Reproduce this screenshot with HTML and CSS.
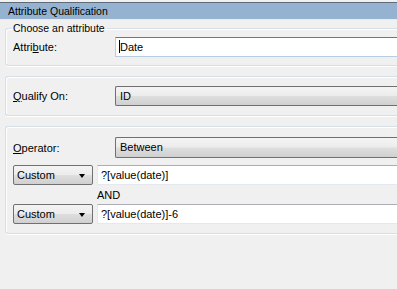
FILE: index.html
```html
<!DOCTYPE html>
<html lang="en">
<head>
  <meta charset="UTF-8">
  <title>Attribute Qualification</title>
  <link rel="stylesheet" href="styles.css">
</head>
<body>
  <div class="titlebar">Attribute Qualification</div>

  <fieldset class="group group-attr">
    <legend>Choose an attribute</legend>
    <div class="row">
      <label class="field-label">Attri<u>b</u>ute:</label>
      <div class="textbox focused"><span class="caret"></span>Date</div>
    </div>
  </fieldset>

  <fieldset class="group group-qualify">
    <div class="row">
      <label class="field-label"><u>Q</u>ualify On:</label>
      <div class="combo">ID</div>
    </div>
  </fieldset>

  <fieldset class="group group-operator">
    <div class="row row-tall">
      <label class="field-label"><u>O</u>perator:</label>
      <div class="combo">Between</div>
    </div>
    <div class="row row-value">
      <div class="dropdown">Custom<span class="arrow"></span></div>
      <div class="textbox">?[value(date)]</div>
    </div>
    <div class="and-label">AND</div>
    <div class="row">
      <div class="dropdown">Custom<span class="arrow"></span></div>
      <div class="textbox">?[value(date)]-6</div>
    </div>
  </fieldset>
</body>
</html>
```

FILE: styles.css
```css
html, body {
  overflow: hidden;
}
body {
  margin: 0;
  width: 397px;
  height: 289px;
  background: #f0f0f0;
  font-family: "Liberation Sans", Arial, sans-serif;
  font-size: 11px;
  color: #000;
}
.titlebar {
  margin-top: 2px;
  height: 16px;
  line-height: 16px;
  padding-left: 8px;
  font-size: 10.5px;
  background: #95b3d0;
  border-top: 1px solid #5f6b78;
  border-bottom: 1px solid #e6ecf2;
}
.group {
  margin: 0 0 0 5px;
  padding: 0 0 9px 7px;
  border: 1px solid #d5dfe5;
  border-right: none;
  border-radius: 3px 0 0 3px;
  box-shadow: inset 1px 1px 0 #fff, 0 1px 0 #fff;
  min-width: 0;
}
.group legend {
  padding: 0 2px;
  margin-left: -2px;
  line-height: 14px;
  font-size: 10.5px;
}
.group-attr {
  margin-top: 1px;
  padding-top: 2px;
  padding-bottom: 8px;
}
.group-qualify {
  margin-top: 10px;
  padding-top: 9px;
}
.group-operator {
  margin-top: 10px;
  padding-top: 10px;
}
.row {
  display: flex;
  align-items: center;
  height: 20px;
}
.row-tall {
  height: 21px;
}
.row-tall .combo {
  height: 21px;
  line-height: 19px;
}
.row-value {
  margin-top: 7px;
}
.field-label {
  width: 102px;
  flex: none;
}
.textbox, .combo {
  flex: 1;
  height: 20px;
  box-sizing: border-box;
  line-height: 18px;
  padding-left: 3px;
}
.textbox {
  background: #fff;
  border: 1px solid #e3e9ef;
  border-top-color: #abadb3;
  border-right: none;
}
.textbox.focused {
  border-color: #b7cde2;
  border-top-color: #5d7c99;
}
.caret {
  display: inline-block;
  width: 1px;
  height: 13px;
  background: #000;
  vertical-align: -2px;
}
.combo {
  padding-left: 4px;
  border: 1px solid #707070;
  border-right: none;
  border-radius: 2px 0 0 2px;
  background: linear-gradient(#f4f4f4 0%, #ececec 48%, #dedede 52%, #d0d0d0 100%);
}
.dropdown {
  position: relative;
  flex: none;
  width: 80px;
  height: 20px;
  box-sizing: border-box;
  margin-right: 4px;
  padding-left: 3px;
  line-height: 18px;
  border: 1px solid #707070;
  border-radius: 2px;
  background: linear-gradient(#f4f4f4 0%, #ececec 48%, #dedede 52%, #d0d0d0 100%);
}
.arrow {
  position: absolute;
  right: 7px;
  top: 8px;
  border-left: 3px solid transparent;
  border-right: 3px solid transparent;
  border-top: 4px solid #000;
}
.and-label {
  height: 19px;
  line-height: 20px;
  padding-left: 84px;
}
```
